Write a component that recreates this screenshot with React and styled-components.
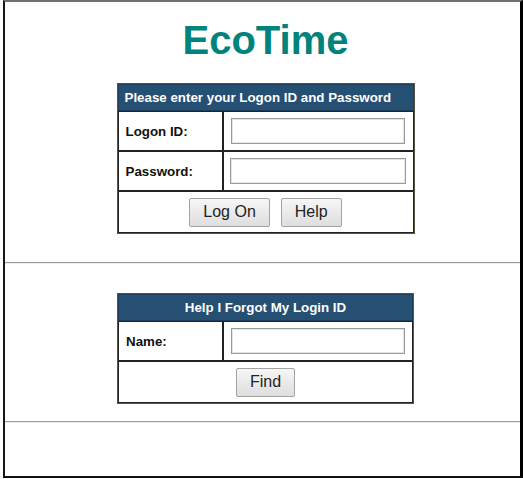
import React from 'react';
import styled, { createGlobalStyle } from 'styled-components';

const GlobalStyle = createGlobalStyle`
  body {
    margin: 0;
    background: #fff;
    font-family: 'Liberation Sans', Arial, sans-serif;
  }
`;

const Frame = styled.div`
  box-sizing: border-box;
  width: 520px;
  height: 478px;
  margin-left: 3px;
  border-top: 2px solid #707070;
  border-left: 2px solid #151515;
  border-right: 3px solid #000;
  border-bottom: 2px solid #111;
  background: #fff;
`;

const Block = styled.div`
  display: flex;
  flex-direction: column;
  align-items: center;
  padding-left: 6px;
  padding-top: ${(p) => p.$top || 0}px;
  padding-bottom: ${(p) => p.$bottom || 0}px;
`;

const Title = styled.h1`
  margin: 0 0 20px;
  font-size: 40px;
  line-height: 46px;
  font-weight: bold;
  color: #00837b;
`;

const Rule = styled.hr`
  margin: 0;
  height: 0;
  border: 0;
  border-top: 1px solid #9c9c9c;
  border-bottom: 1px solid #ececec;
`;

const Table = styled.table`
  width: ${(p) => p.$width}px;
  border-collapse: separate;
  border-spacing: 0;
  border: 1px solid #56563f;
  font-size: 10pt;
`;

const Head = styled.th`
  height: 15px;
  padding: 5px 6px;
  background: #264f74;
  border: 1px solid #1e3d5b;
  color: #fff;
  font-weight: bold;
  line-height: 15px;
  text-align: ${(p) => p.$align || 'left'};
`;

const Cell = styled.td`
  height: ${(p) => p.$height || 38}px;
  padding: 0 7px;
  border: 1px solid #222;
  vertical-align: middle;
`;

const Label = styled(Cell)`
  width: 90px;
  font-weight: bold;
  color: #111;
`;

const Field = styled.input`
  box-sizing: border-box;
  display: block;
  width: ${(p) => p.$width || 174}px;
  height: 26px;
  margin: 0 0 0 ${(p) => p.$shift || 0}px;
  border: 1px solid #9a9a9a;
  box-shadow: inset 0 0 0 1px #e4e4e4;
  background: #fff;
`;

const Buttons = styled.div`
  display: flex;
  justify-content: center;
  gap: 11px;
`;

const Button = styled.button`
  height: 29px;
  padding: 0 13px;
  border: 1px solid #a3a3a3;
  border-radius: 2px;
  background: linear-gradient(#f6f6f6, #dedede);
  font-family: 'Liberation Sans', Arial, sans-serif;
  font-size: 16px;
  color: #222;
`;

const LoginBox = () => (
  <Table $width={298}>
    <tbody>
      <tr>
        <Head colSpan={2}>Please enter your Logon ID and Password</Head>
      </tr>
      <tr>
        <Label>Logon ID:</Label>
        <Cell>
          <Field type="text" />
        </Cell>
      </tr>
      <tr>
        <Label>Password:</Label>
        <Cell>
          <Field type="password" $width={176} $shift={-1} />
        </Cell>
      </tr>
      <tr>
        <Cell colSpan={2} $height={40}>
          <Buttons>
            <Button type="button">Log On</Button>
            <Button type="button">Help</Button>
          </Buttons>
        </Cell>
      </tr>
    </tbody>
  </Table>
);

const ForgotBox = () => (
  <Table $width={297}>
    <tbody>
      <tr>
        <Head colSpan={2} $align="center">Help I Forgot My Login ID</Head>
      </tr>
      <tr>
        <Label>Name:</Label>
        <Cell>
          <Field type="text" />
        </Cell>
      </tr>
      <tr>
        <Cell colSpan={2} $height={40}>
          <Buttons>
            <Button type="button">Find</Button>
          </Buttons>
        </Cell>
      </tr>
    </tbody>
  </Table>
);

const App = () => (
  <>
    <GlobalStyle />
    <Frame>
      <Block $top={15} $bottom={28}>
        <Title>EcoTime</Title>
        <LoginBox />
      </Block>
      <Rule />
      <Block $top={29} $bottom={17}>
        <ForgotBox />
      </Block>
      <Rule />
    </Frame>
  </>
);

export default App;
